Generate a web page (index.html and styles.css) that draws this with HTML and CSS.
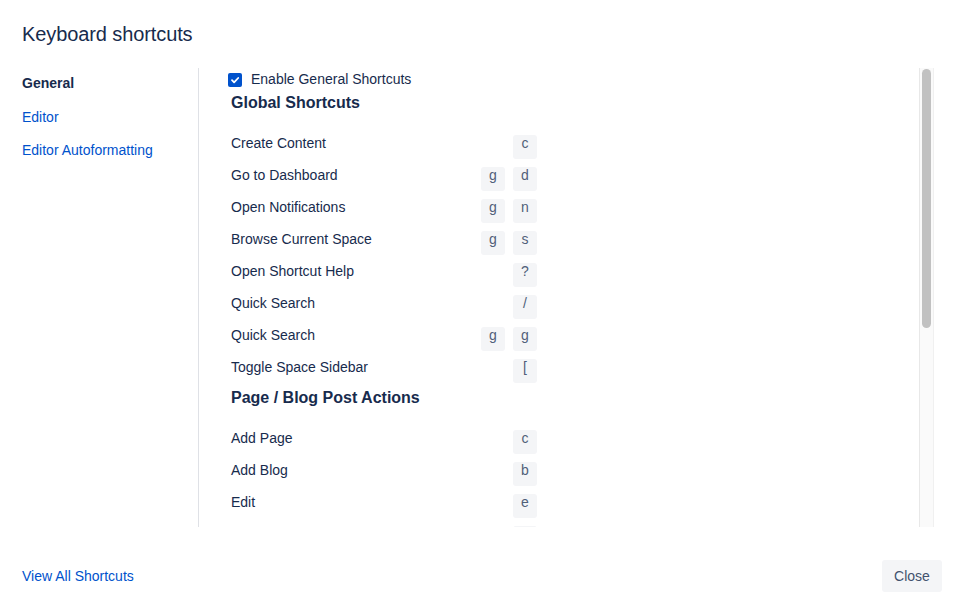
FILE: index.html
```html
<!DOCTYPE html>
<html lang="en">
<head>
  <meta charset="UTF-8">
  <title>Keyboard shortcuts</title>
  <link rel="stylesheet" href="styles.css">
</head>
<body>
  <div class="dialog">

    <div class="header">
      <h2 class="title">Keyboard shortcuts</h2>
    </div>

    <div class="main">
      <div class="nav">
        <span class="nav-item current">General</span>
        <a class="nav-item" href="#">Editor</a>
        <a class="nav-item" href="#">Editor Autoformatting</a>
      </div>

      <div class="scroller">
        <div class="content">
          <label class="enable">
            <span class="check">
              <svg width="14" height="14" viewBox="0 0 14 14"><path d="M4 7.2l2.1 2.1L10.2 5" fill="none" stroke="#fff" stroke-width="1.8" stroke-linecap="round" stroke-linejoin="round"/></svg>
            </span>
            Enable General Shortcuts
          </label>

          <h3 class="section first">Global Shortcuts</h3>
          <div class="list">
            <div class="row"><span>Create Content</span><span class="keys"><kbd>c</kbd></span></div>
            <div class="row"><span>Go to Dashboard</span><span class="keys"><kbd>g</kbd><kbd>d</kbd></span></div>
            <div class="row"><span>Open Notifications</span><span class="keys"><kbd>g</kbd><kbd>n</kbd></span></div>
            <div class="row"><span>Browse Current Space</span><span class="keys"><kbd>g</kbd><kbd>s</kbd></span></div>
            <div class="row"><span>Open Shortcut Help</span><span class="keys"><kbd>?</kbd></span></div>
            <div class="row"><span>Quick Search</span><span class="keys"><kbd>/</kbd></span></div>
            <div class="row"><span>Quick Search</span><span class="keys"><kbd>g</kbd><kbd>g</kbd></span></div>
            <div class="row"><span>Toggle Space Sidebar</span><span class="keys"><kbd>[</kbd></span></div>
          </div>

          <h3 class="section">Page / Blog Post Actions</h3>
          <div class="list">
            <div class="row"><span>Add Page</span><span class="keys"><kbd>c</kbd></span></div>
            <div class="row"><span>Add Blog</span><span class="keys"><kbd>b</kbd></span></div>
            <div class="row"><span>Edit</span><span class="keys"><kbd>e</kbd></span></div>
            <div class="row"><span></span><span class="keys"><kbd></kbd></span></div>
          </div>
        </div>

        <div class="scrollbar">
          <div class="thumb"></div>
        </div>
      </div>
    </div>

    <div class="footer">
      <a class="all-link" href="#">View All Shortcuts</a>
      <button class="close">Close</button>
    </div>

  </div>
</body>
</html>
```

FILE: styles.css
```css
body{
  margin: 0;
  background: #fff;
  font-family: "Liberation Sans", Arial, sans-serif;
  font-size: 14px;
  color: #172B4D;
}

.dialog{
  width: 963px;
  height: 614px;
  display: flex;
  flex-direction: column;
}

.header{
  padding: 22px;
}

.title{
  margin: 0;
  font-size: 20px;
  font-weight: normal;
  line-height: 24px;
  letter-spacing: -0.1px;
}

.main{
  display: flex;
  height: 459px;
  padding: 0 29px 0 22px;
}

.nav{
  width: 177px;
  flex-shrink: 0;
  box-sizing: border-box;
  border-right: 1px solid #DFE1E6;
  padding-top: 5px;
  display: flex;
  flex-direction: column;
  gap: 13.5px;
}

.nav-item{
  line-height: 20px;
  color: #0052CC;
  text-decoration: none;
}

.nav-item.current{
  color: #172B4D;
  font-weight: bold;
}

.scroller{
  flex: 1;
  display: flex;
  overflow: hidden;
}

.content{
  flex: 1;
  overflow: hidden;
  padding: 1px 0 0 32px;
}

/* fake scrollbar, the shot is taken without native ones */
.scrollbar{
  width: 15px;
  flex-shrink: 0;
  box-sizing: border-box;
  background: #FAFAFA;
  border-left: 1px solid #E8E8E8;
  border-right: 1px solid #F0F0F0;
  padding: 1px 2px 0 2px;
}

.thumb{
  height: 259px;
  border-radius: 5px;
  background: #C1C1C1;
}

.enable{
  display: flex;
  align-items: center;
  gap: 9px;
  margin-left: -3px;
  line-height: 20px;
}

.check{
  width: 14px;
  height: 14px;
  border-radius: 2px;
  background: #0052CC;
  display: flex;
  margin-top: 2px;
}

.section{
  margin: 5px 0 20px 0;
  font-size: 16px;
  line-height: 20px;
  font-weight: bold;
}

.section.first{
  margin-top: 4px;
}

.list{
  display: flex;
  flex-direction: column;
  gap: 6px;
  width: 306px;
}

.row{
  display: flex;
  justify-content: space-between;
  align-items: flex-start;
  height: 26px;
  line-height: 20px;
}

.keys{
  display: flex;
  gap: 8px;
  margin-top: 2px;
}

kbd{
  width: 24px;
  height: 24px;
  box-sizing: border-box;
  border-radius: 3px;
  background: #F4F5F7;
  color: #505F79;
  font-family: "Liberation Sans", Arial, sans-serif;
  font-size: 14px;
  line-height: 16px;
  text-align: center;
}

.footer{
  display: flex;
  justify-content: space-between;
  align-items: center;
  padding: 33px 21px 21px 22px;
}

.all-link{
  color: #0052CC;
  text-decoration: none;
  line-height: 20px;
}

.close{
  height: 32px;
  width: 60px;
  border: none;
  border-radius: 3px;
  background: #F4F5F7;
  color: #42526E;
  font-family: "Liberation Sans", Arial, sans-serif;
  font-size: 14px;
  padding: 0;
}
```
